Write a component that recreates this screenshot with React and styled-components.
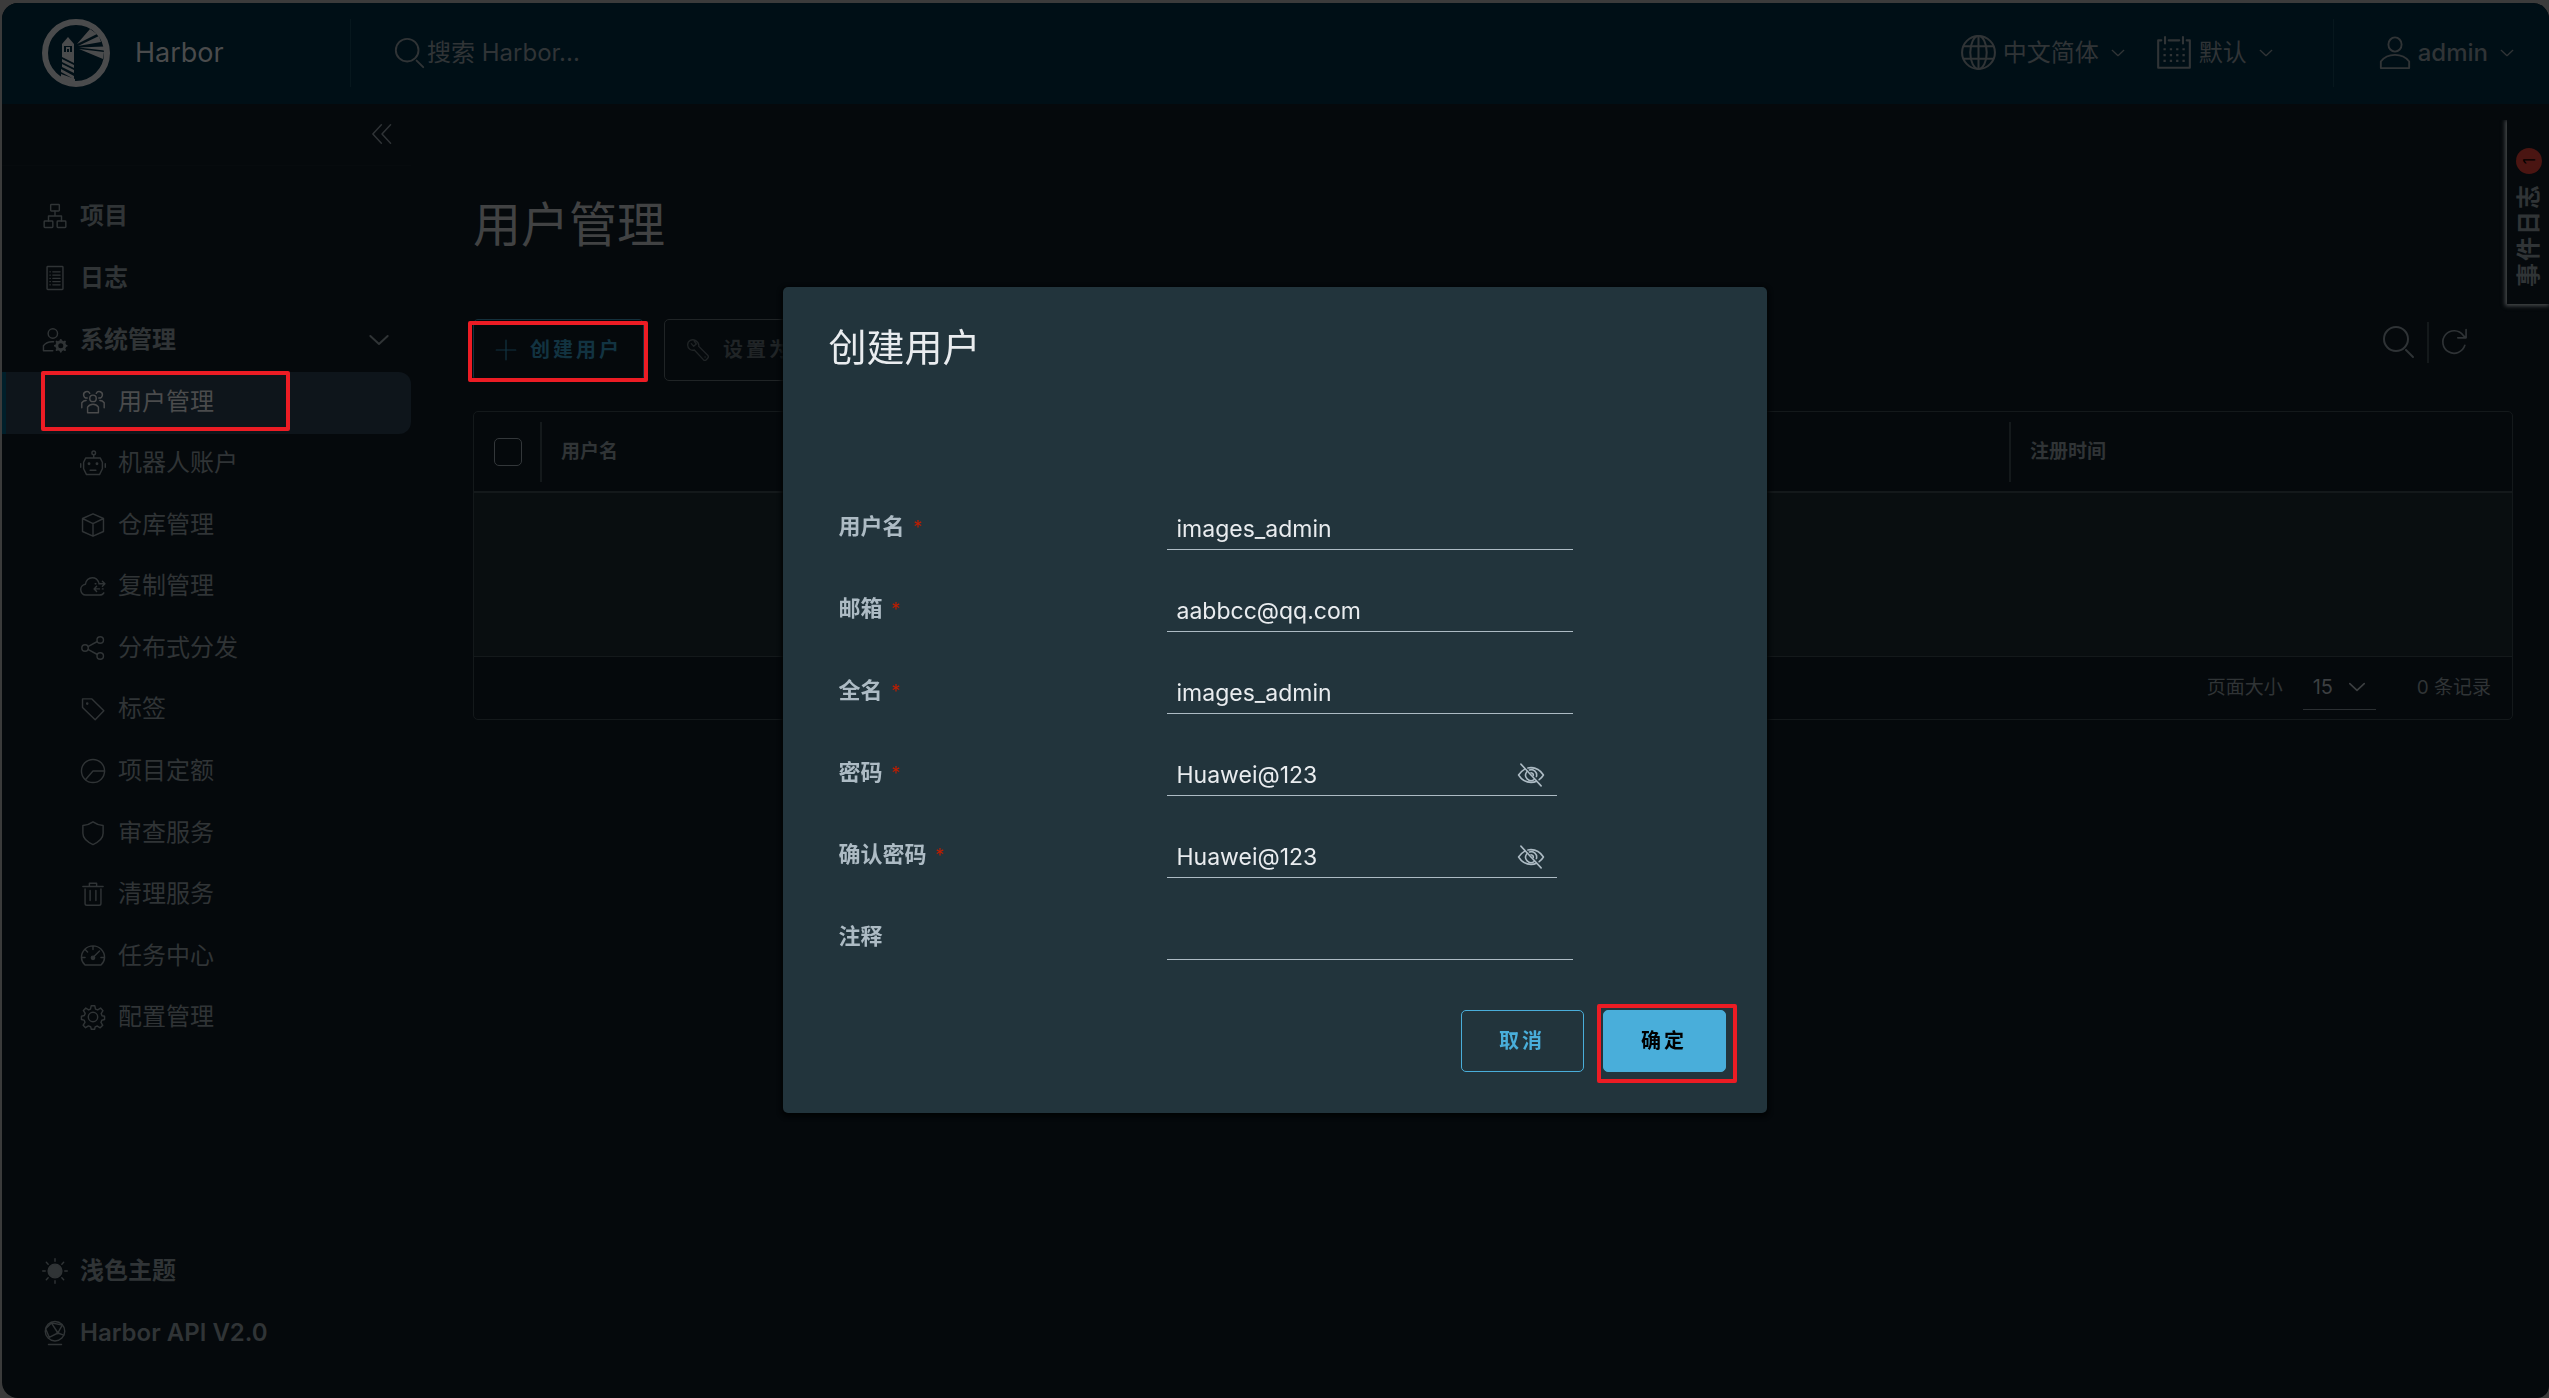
import React, { useState } from 'react';
import styled, { createGlobalStyle, css } from 'styled-components';

const c = {
  frame: '#3b3b3b',
  page: '#05090c',
  header: '#000f16',
  active: '#0e151b',
  activeBar: '#001f2a',
  title: '#414243',
  text: '#303436',
  strong: '#4a4b4c',
  icon: '#2f3336',
  line: '#14191b',
  body: '#090e10',
  mark: '#ec1c24',
  modal: '#22343c',
  label: '#adbbc4',
  input: '#e9ecef',
  blue: '#49aeda',
};

const GlobalStyle = createGlobalStyle`
  * { box-sizing: border-box; }
  html, body, #root { height: 100%; }
  body {
    margin: 0;
    background: ${c.frame};
    color: ${c.text};
    font-family: Inter, "Noto Sans CJK SC", sans-serif;
    font-size: 24px;
    line-height: 36px;
  }
  button, input, select { font: inherit; color: inherit; }
  button { cursor: pointer; }
  a { color: inherit; text-decoration: none; }
  ul { list-style: none; margin: 0; padding: 0; }
`;

const Window = styled.div`
  min-height: 100%;
  padding: 3px 0 0 2px;
  display: flex;
`;
const Shell = styled.div`
  flex: 1;
  min-width: 0;
  display: flex;
  flex-direction: column;
  background: ${c.page};
  border-radius: 16px 16px 12px 16px;
  overflow: hidden;
  position: relative;
`;

/* header */
const Header = styled.header`
  display: flex;
  align-items: center;
  height: 101px;
  padding: 0 34px 2px 40px;
  background: ${c.header};
`;
const Brand = styled.a`
  display: flex;
  align-items: center;
  gap: 25px;
  width: 308px;
  color: ${c.strong};
  font-size: 27px;
`;
const HeaderRule = styled.span`
  width: 1px;
  height: 68px;
  background: #07171d;
`;
const SearchBox = styled.label`
  flex: 1;
  display: flex;
  align-items: center;
  padding-left: 42px;
`;
const SearchInput = styled.input`
  flex: 1;
  min-width: 0;
  padding: 0;
  border: 0;
  outline: 0;
  background: none;
  &::placeholder { color: ${c.text}; opacity: 1; }
`;
const HeaderButton = styled.button`
  display: flex;
  align-items: center;
  padding: 0;
  border: 0;
  background: none;
  margin-left: ${(p) => p.$before || 0}px;
  font-weight: ${(p) => (p.$strong ? 500 : 400)};
`;
const HeaderText = styled.span`
  margin: 0 11px 0 6px;
`;

/* body */
const Body = styled.div`
  flex: 1;
  display: flex;
  min-height: 0;
`;
const Sidebar = styled.nav`
  width: 409px;
  flex: none;
  display: flex;
  flex-direction: column;
  padding-bottom: 33px;
`;
const CollapseBar = styled.div`
  display: flex;
  justify-content: flex-end;
  align-items: flex-start;
  height: 62px;
  padding: 19px 18px 0 0;
  border-bottom: 1px solid #070b0e;
`;
const IconButton = styled.button`
  display: flex;
  align-items: center;
  justify-content: center;
  padding: 0;
  border: 0;
  background: none;
  color: ${(p) => p.$tone || c.icon};
`;
const MainList = styled.ul`
  padding-top: 20px;
  flex: 1;
`;
const SubList = styled.ul`
  display: grid;
  grid-auto-rows: 1fr;
  height: 677px;
`;
const NavItem = styled.li`
  position: relative;
  display: flex;
`;
const NavLink = styled.a`
  flex: 1;
  display: flex;
  align-items: center;
  gap: 12px;
  min-height: ${(p) => (p.$sub ? 61 : 62)}px;
  padding: 0 20px 2px ${(p) => (p.$sub ? 78 : 40)}px;
  font-weight: ${(p) => (p.$sub ? 400 : 600)};
  ${(p) => p.$active && css`
    color: ${c.strong};
    background: ${c.active};
    border-left: 4px solid ${c.activeBar};
    padding-left: 74px;
    border-radius: 0 12px 12px 0;
  `}
`;
const NavText = styled.span`
  flex: 1;
`;
const Mark = styled.span`
  position: absolute;
  inset: ${(p) => p.$inset};
  border: 4px solid ${c.mark};
  border-radius: 2px;
  pointer-events: none;
`;

const Main = styled.main`
  flex: 1;
  min-width: 0;
  padding: 85px 36px 0 62px;
`;
const PageTitle = styled.h1`
  margin: 0;
  font-size: 48px;
  line-height: 72px;
  font-weight: 400;
  color: ${c.title};
`;
const Toolbar = styled.div`
  display: flex;
  align-items: center;
  gap: 20px;
  margin: 58px 0 30px;
`;
const Anchor = styled.span`
  position: relative;
  display: flex;
`;
const Button = styled.button`
  height: 62px;
  display: flex;
  align-items: center;
  justify-content: center;
  gap: 13px;
  padding: 0 21px;
  min-width: 123px;
  border-radius: 5px;
  border: 1px solid ${(p) => p.$edge};
  background: ${(p) => p.$fill || 'transparent'};
  color: ${(p) => p.$tone};
  font-size: 20px;
  font-weight: 600;
  letter-spacing: 3px;
`;
const Tools = styled.div`
  display: flex;
  align-items: center;
  margin: 0 44px 16px auto;
  gap: 10px;
`;
const ToolRule = styled.span`
  width: 2px;
  height: 41px;
  background: ${c.line};
`;

const Grid = styled.div`
  border: 1px solid ${c.line};
  border-radius: 5px;
  font-size: 19px;
  line-height: 28px;
`;
const Table = styled.table`
  width: 100%;
  table-layout: fixed;
  border-collapse: collapse;
`;
const Th = styled.th`
  height: 80px;
  padding: 0;
  text-align: left;
  font-weight: 600;
  border-bottom: 2px solid ${c.line};
  width: ${(p) => p.$width || 'auto'};
`;
const CheckCell = styled.div`
  display: flex;
  padding: 1px 0 0 20px;
`;
const HeadCell = styled.div`
  height: 60px;
  padding: 16px 0 0 19px;
  border-left: 2px solid ${c.line};
`;
const Checkbox = styled.input`
  appearance: none;
  width: 28px;
  height: 28px;
  margin: 0;
  border: 1px solid #33373a;
  border-radius: 5px;
`;
const EmptyCell = styled.td`
  height: 164px;
  background: ${c.body};
  border-bottom: 1px solid ${c.line};
`;
const GridFooter = styled.div`
  display: flex;
  align-items: center;
  justify-content: flex-end;
  height: 62px;
  padding: 0 21px;
`;
const PageSize = styled.label`
  display: flex;
  align-items: center;
  gap: 20px;
  margin-right: 41px;
`;
const SelectWrap = styled.span`
  display: grid;
  grid-template-columns: 1fr 20px;
  align-items: center;
  width: 73px;
  height: 44px;
  padding: 0 9px 0 10px;
  border-bottom: 1px solid #2b2f32;
  color: #3c3f41;
`;
const Select = styled.select`
  appearance: none;
  padding: 0;
  border: 0;
  background: none;
  font-size: 20px;
`;

const EventTab = styled.button`
  position: absolute;
  top: 117px;
  right: 0;
  width: 42px;
  height: 184px;
  display: flex;
  flex-direction: column;
  align-items: center;
  gap: 9px;
  padding: 28px 0 0 2px;
  border: 0;
  background: ${c.page};
  box-shadow: -1px 1px 4px 1px #45484a;
  clip-path: inset(0 0 -8px -8px);
  line-height: 24px;
  font-weight: 600;
`;
const EventText = styled.span`
  writing-mode: vertical-rl;
  text-orientation: sideways;
  transform: rotate(180deg);
  letter-spacing: 2px;
`;
const Badge = styled.span`
  width: 26px;
  height: 26px;
  border-radius: 50%;
  display: grid;
  place-items: center;
  background: #4a1512;
  color: #000;
  font-size: 16px;
  font-weight: 400;
  transform: rotate(-90deg);
`;

/* dialog */
const Overlay = styled.div`
  position: fixed;
  inset: 2px 0 0 0;
  display: grid;
  place-items: center;
`;
const Dialog = styled.form`
  width: 984px;
  padding: 32px 41px 41px 46px;
  border-radius: 5px;
  background: ${c.modal};
  box-shadow: 0 2px 4px 2px #020405;
`;
const DialogTitle = styled.h2`
  margin: 0 0 113px;
  font-size: 38px;
  line-height: 56px;
  font-weight: 400;
  color: ${c.input};
`;
const Field = styled.div`
  display: flex;
  height: 82px;
  padding-left: 10px;
`;
const Label = styled.label`
  width: 328px;
  padding-top: 22px;
  font-size: 22px;
  line-height: 33px;
  font-weight: 600;
  color: ${c.label};
`;
const Star = styled.span`
  margin-left: 9px;
  font-size: 18px;
  font-weight: 400;
  color: #c21d00;
`;
const InputWrap = styled.div`
  display: flex;
  align-items: center;
  width: ${(p) => (p.$short ? 390 : 406)}px;
  height: 42px;
  margin-top: 20px;
  padding: 0 12px 0 10px;
  border-bottom: 1px solid ${c.label};
  color: ${c.label};
`;
const TextInput = styled.input`
  flex: 1;
  min-width: 0;
  padding: 0;
  border: 0;
  outline: 0;
  background: none;
  font-size: 23px;
  color: ${c.input};
`;
const Actions = styled.div`
  display: flex;
  justify-content: flex-end;
  gap: 19px;
  margin-top: 30px;
`;

/* icons, drawn on a 36 unit canvas */
const Svg = ({ size, children, w = 2 }) => (
  <svg width={size} height={size} viewBox="0 0 36 36" fill="none" stroke="currentColor"
    strokeWidth={w} strokeLinecap="round" strokeLinejoin="round" aria-hidden="true">{children}</svg>
);
const icons = {
  search: <><circle cx="15" cy="15" r="12" /><path d="M25 26l7 7" /></>,
  world: <><circle cx="18" cy="18" r="16" /><ellipse cx="18" cy="18" rx="8" ry="16" /><path d="M18 2v32M4 12h28M4 24h28" /></>,
  calendar: <>
    <path d="M6 6H3v26h30V6h-3M13 6h10M9.500 3v6M26.500 3v6" />
    <path strokeLinecap="butt" strokeDasharray="2.200 3.800" d="M8 14.500h21M8 20h21M8 25.500h21" />
  </>,
  user: <><ellipse cx="18" cy="9" rx="7" ry="7.500" /><path d="M3 34v-7c3-4 9-7 15-7s12 3 15 7v7z" /></>,
  angle: <path d="M5 12l13 12 13-12" />,
  collapse: <path d="M17 3L3 18l14 15M32 3L18 18l14 15" />,
  organization: <><rect x="12" y="2" width="12" height="9" rx="1" /><rect x="3" y="25" width="12" height="9" rx="1" /><rect x="21" y="25" width="12" height="9" rx="1" /><path d="M18 11v7M9 25v-7h18v7" /></>,
  list: <><rect x="7" y="2" width="22" height="32" rx="1" /><path d="M15 9.500h10M15 14h10M15 18.500h10M15 23h10M15 27.500h10M11 9.500h.5M11 14h.5M11 18.500h.5M11 23h.5M11 27.500h.5" /></>,
  admin: <>
    <circle cx="15" cy="9" r="6.500" /><path d="M15 33H2v-7c3-4 8-6 14-5.500" />
    <circle cx="26" cy="26" r="5.500" strokeWidth="4" />
    <path strokeWidth="3" d="M26 18v2M26 32v2M18 26h2M32 26h2M20.300 20.300l1.400 1.400M30.300 30.300l1.400 1.400M20.300 31.700l1.400-1.400M30.300 21.700l1.400-1.400" />
  </>,
  users: <>
    <circle cx="18" cy="13" r="4.500" /><path d="M10.500 33v-8c2-3 4.500-4 7.500-4s5.500 1 7.500 4v8z" />
    <path d="M10 12.500A4.500 4.500 0 1 1 13.500 6M26 12.500A4.500 4.500 0 1 0 22.500 6M2.500 26v-7c1.500-2 3.500-3 6-3M33.500 26v-7c-1.500-2-3.500-3-6-3" />
  </>,
  robot: <>
    <circle cx="19" cy="4" r="2.500" /><path d="M19 6.500V11M8 11h20l3 6v9l-4 8H9l-4-8v-9zM1 19v5M35 19v5M14 28h8" />
    <circle cx="12.500" cy="19" r="1" /><circle cx="23.500" cy="19" r="1" />
  </>,
  cube: <path d="M18 2.500L32.500 9v18L18 33.500 3.500 27V9zM3.500 9L18 16l14.500-7M18 16v17.500" />,
  cloud: <>
    <path d="M26 13c-1.500-4-5-6.500-9-6.500-5 0-9 4-9.500 9C4 16 1 19 1 23s3 7.500 7 7.500h19c3 0 5-1 6-3" />
    <path d="M26 15h8M31 11.500l3.500 3.500L31 18.500M20 22h7M23 18.500L19.500 22l3.500 3.500" /><path d="M21 15h1M31 22h1" />
  </>,
  share: <><circle cx="7" cy="18" r="4.500" /><circle cx="28" cy="7" r="4.500" /><circle cx="28" cy="29" r="4.500" /><path d="M11 16l13-7M11 20l13 7" /></>,
  tag: <><path d="M3.500 4h13L33 20.500 21 33 3.500 16z" /><circle cx="10" cy="10.500" r=".8" /></>,
  pie: <><circle cx="18" cy="18" r="16" /><path d="M34 18H18L7.500 30" /></>,
  shield: <path d="M18 2.500c4 3 9 4.500 14 5v11c0 7-6 12-14 15.500C10 30.500 4 25.500 4 18.500v-11c5-.5 10-2 14-5z" />,
  trash: <path d="M4 7.500h28M13 7V3h10v4M7 11v20c0 1.500 1 2.500 2.500 2.500h17c1.500 0 2.500-1 2.500-2.500V11M14 13v14M22 13v14" />,
  gauge: <><path d="M7 30.500C4 27.500 2 24 2 20a16 16 0 0 1 32 0c0 4-2 7.500-5 10.500zM18 4.500V9M3 20h4M29 20h4M7.500 9.500l3 3M19 19l8-8" /><circle cx="18" cy="20.500" r="2.300" fill="currentColor" /></>,
  cog: <>
    <circle cx="18" cy="18" r="6.500" />
    <path d="M15.500 2.500h5l1 4.500 3 1.200 4-2.500 3.300 3.500-2.500 4 1.200 3 3.500.8v4.500l-3.800 1-1.200 3 2.500 4-3.500 3.500-4-2.500-3 1.200-.8 3.300h-4.500l-1-3.500-3-1.200-4 2.500-3.300-3.500 2.500-4-1.200-3-3.700-.8v-4.500l4-1 1.200-3-2.500-4L8 5.700l4 2.500L14.500 7z" />
  </>,
  sun: <><circle cx="18" cy="18" r="9.500" fill="currentColor" /><path d="M18 1v3.500M18 31.500V35M1 18h3.500M31.500 18H35M6 6l2.500 2.500M27.500 27.500L30 30M6 30l2.500-2.500M27.500 8.500L30 6" /></>,
  network: <><circle cx="18" cy="15.500" r="13.500" /><path d="M9 34h18M13 4l9 14-12 6M13 4l15 3-6 11 8 3M5 12l8-8M5 12l5 12" /><circle cx="22" cy="18" r="1" /></>,
  plus: <path d="M18 2v32M2 18h32" />,
  wrench: <path d="M14 3.500C9 1 2.500 4 2.500 10.500c0 5.500 5 9 10 7.500l13.500 14.500c1.500 1.500 3 1.500 4.500 0l2-2c1.500-1.500 1.500-3 0-4.500L19 12.500c.8-3-1-6.500-5-9l-1.500 1.500 3 4-4 3.500-3.500-4M28.500 28.500h.2" />,
  refresh: <path d="M31 22a13.500 13.500 0 1 1-2-12l3 3M32.500 3v10h-10" />,
  eyeOff: <><path d="M5 4l26 28M10 10.500C6.500 12.500 4 15 2 18c3.500 5.500 9 9.500 16 9.500 2.500 0 5-.5 7-1.500M14 9c1.300-.3 2.600-.5 4-.5 7 0 12.500 4 16 9.500-1.500 2.500-3.500 4.500-5.500 6" /><path d="M12.500 14a7 7 0 0 0 9.500 10M16 11.500a7 7 0 0 1 9 8.500M18 15a3.500 3.500 0 0 1 3 3.500" /></>,
};
const Icon = ({ name, size = 26, w }) => <Svg size={size} w={w}>{icons[name]}</Svg>;

const Logo = () => (
  <svg width="68" height="68" viewBox="0 0 68 68" fill="currentColor" aria-hidden="true">
    <circle cx="34" cy="34" r="31" fill="none" stroke="currentColor" strokeWidth="6" />
    <path d="M26 18l6 7v10H20V25z" />
    <path d="M22 27h8v6h-8z" fill={c.header} />
    <path d="M24 28h4v5h-1v-3h-2v3h-1z" />
    <path d="M20 35h12v9l-12-6z" />
    <path d="M20 40l12 6v3l-12-6zM20 45l12 6v3l-12-6zM19 50l13 7v3l-13-7zM19 55l14 5v6l-14-5z" />
    <path d="M35 25L48 10l7 5zM36 27l21-10 2 6zM37 28.500l25-1v4zM37 30l25 3-1 7z" />
  </svg>
);

const children = [
  ['users', '用户管理'], ['robot', '机器人账户'], ['cube', '仓库管理'], ['cloud', '复制管理'],
  ['share', '分布式分发'], ['tag', '标签'], ['pie', '项目定额'], ['shield', '审查服务'],
  ['trash', '清理服务'], ['gauge', '任务中心'], ['cog', '配置管理'],
];
const fields = [
  { id: 'username', label: '用户名', value: 'images_admin', required: true },
  { id: 'email', label: '邮箱', value: 'aabbcc@qq.com', required: true },
  { id: 'realname', label: '全名', value: 'images_admin', required: true },
  { id: 'password', label: '密码', value: 'Huawei@123', required: true, secret: true },
  { id: 'confirm', label: '确认密码', value: 'Huawei@123', required: true, secret: true },
  { id: 'comment', label: '注释', value: '' },
];

function FormField({ field }) {
  const [value, setValue] = useState(field.value);
  return (
    <Field>
      <Label htmlFor={field.id}>{field.label}{field.required && <Star>*</Star>}</Label>
      <InputWrap $short={field.secret}>
        <TextInput id={field.id} value={value} onChange={(e) => setValue(e.target.value)} />
        {field.secret && (
          <IconButton type="button" $tone={c.label} aria-label={field.label}>
            <Icon name="eyeOff" size={28} />
          </IconButton>
        )}
      </InputWrap>
    </Field>
  );
}

export default function App() {
  return (
    <Window>
      <GlobalStyle />
      <Shell>
        <Header>
          <Brand href="#"><Logo />Harbor</Brand>
          <HeaderRule />
          <SearchBox>
            <Icon name="search" size={34} />
            <SearchInput placeholder="搜索 Harbor..." aria-label="搜索 Harbor..." />
          </SearchBox>
          <HeaderButton>
            <Icon name="world" size={37} /><HeaderText>中文简体</HeaderText><Icon name="angle" size={16} w={3} />
          </HeaderButton>
          <HeaderButton $before={29}>
            <Icon name="calendar" size={38} /><HeaderText>默认</HeaderText><Icon name="angle" size={16} w={3} />
          </HeaderButton>
          <HeaderButton as="span" $before={59}><HeaderRule /></HeaderButton>
          <HeaderButton $before={44} $strong>
            <Icon name="user" size={34} /><HeaderText>admin</HeaderText><Icon name="angle" size={16} w={3} />
          </HeaderButton>
        </Header>
        <Body>
          <Sidebar>
            <CollapseBar>
              <IconButton type="button" aria-label="collapse"><Icon name="collapse" size={22} w={2.5} /></IconButton>
            </CollapseBar>
            <MainList>
              <NavItem><NavLink href="#"><Icon name="organization" /><NavText>项目</NavText></NavLink></NavItem>
              <NavItem><NavLink href="#"><Icon name="list" /><NavText>日志</NavText></NavLink></NavItem>
              <NavItem>
                <NavLink href="#"><Icon name="admin" /><NavText>系统管理</NavText><Icon name="angle" size={24} w={3} /></NavLink>
              </NavItem>
              <SubList>
                {children.map(([icon, text], i) => (
                  <NavItem key={text}>
                    <NavLink href="#" $sub $active={i === 0}><Icon name={icon} /><NavText>{text}</NavText></NavLink>
                    {i === 0 && <Mark $inset="-1px 121px 3px 39px" />}
                  </NavItem>
                ))}
              </SubList>
            </MainList>
            <ul>
              <NavItem><NavLink href="#"><Icon name="sun" /><NavText>浅色主题</NavText></NavLink></NavItem>
              <NavItem><NavLink href="#"><Icon name="network" /><NavText>Harbor API V2.0</NavText></NavLink></NavItem>
            </ul>
          </Sidebar>
          <Main>
            <PageTitle>用户管理</PageTitle>
            <Toolbar>
              <Anchor>
                <Button $edge="#14303c" $tone="#123341"><Icon name="plus" size={22} />创建用户</Button>
                <Mark $inset="2px -4px -1px -5px" />
              </Anchor>
              <Button $edge="#202426" $tone="#202426"><Icon name="wrench" size={24} />设置为</Button>
              <Tools>
                <IconButton type="button" aria-label="search"><Icon name="search" size={36} /></IconButton>
                <ToolRule />
                <IconButton type="button" aria-label="refresh"><Icon name="refresh" size={30} /></IconButton>
              </Tools>
            </Toolbar>
            <Grid>
              <Table>
                <thead>
                  <tr>
                    <Th $width="66px"><CheckCell><Checkbox type="checkbox" aria-label="全选" /></CheckCell></Th>
                    <Th><HeadCell>用户名</HeadCell></Th>
                    <Th><HeadCell /></Th>
                    <Th><HeadCell /></Th>
                    <Th $width="503px"><HeadCell>注册时间</HeadCell></Th>
                  </tr>
                </thead>
                <tbody><tr><EmptyCell colSpan={5} /></tr></tbody>
              </Table>
              <GridFooter>
                <PageSize>
                  页面大小
                  <SelectWrap>
                    <Select defaultValue="15"><option>15</option></Select>
                    <Icon name="angle" size={20} w={3} />
                  </SelectWrap>
                </PageSize>
                <span>0 条记录</span>
              </GridFooter>
            </Grid>
          </Main>
        </Body>
        <EventTab type="button"><Badge>1</Badge><EventText>事件日志</EventText></EventTab>
      </Shell>
      <Overlay>
        <Dialog role="dialog" aria-labelledby="dialog-title" onSubmit={(e) => e.preventDefault()}>
          <DialogTitle id="dialog-title">创建用户</DialogTitle>
          {fields.map((f) => <FormField key={f.id} field={f} />)}
          <Actions>
            <Button type="button" $edge={c.blue} $tone={c.blue}>取消</Button>
            <Anchor>
              <Button type="submit" $edge={c.blue} $fill={c.blue} $tone="#000">确定</Button>
              <Mark $inset="-6px -11px -11px -6px" />
            </Anchor>
          </Actions>
        </Dialog>
      </Overlay>
    </Window>
  );
}
